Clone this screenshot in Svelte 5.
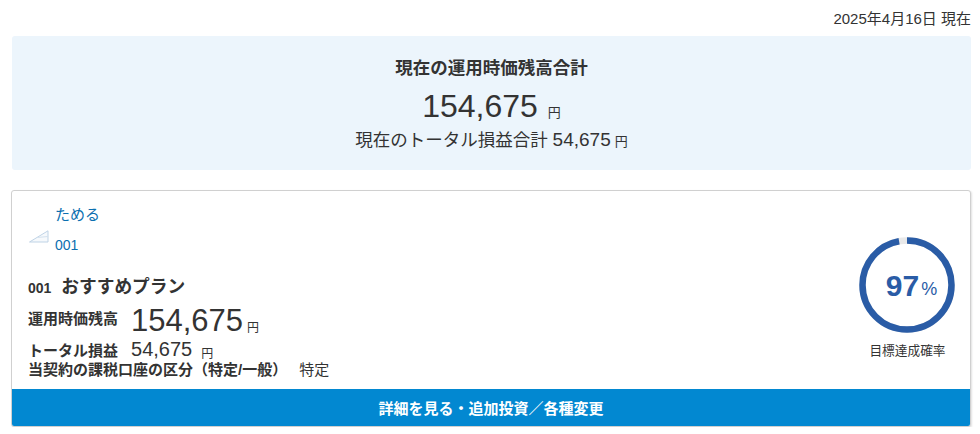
<script lang="ts">
  const rate = 97;
  const r = 44.5;
  const circ = 2 * Math.PI * r;
  const gap = circ * (1 - rate / 100);
</script>

<main class="page">
  <p class="asof">2025年4月16日 現在</p>

  <section class="total">
    <h2>現在の運用時価残高合計</h2>
    <p class="amount">154,675<span class="yen">円</span></p>
    <p class="profit">現在のトータル損益合計 <span class="num">54,675</span><span class="yen">円</span></p>
  </section>

  <section class="card">
    <div class="body">
      <div class="info">
        <div class="cat">
          <svg class="cat-icon" width="20" height="13" viewBox="0 0 20 13" aria-hidden="true">
            <path d="M.5 12 L19 .8 V12 Z" fill="#f6f9fc" stroke="#bfd3e6" stroke-width="1" />
            <path d="M8 7.5 L19 6.5" stroke="#d3e1ee" stroke-width="1" />
          </svg>
          <div class="cat-text">
            <a href="#top">ためる</a>
            <a class="code" href="#top">001</a>
          </div>
        </div>

        <h3><span class="no">001</span>おすすめプラン</h3>
        <div class="row balance">
          <span class="label">運用時価残高</span>
          <span class="big">154,675</span><span class="yen">円</span>
        </div>
        <div class="row pl">
          <span class="label">トータル損益</span>
          <span class="mid">54,675</span><span class="yen">円</span>
        </div>
        <div class="row tax">
          <span class="label">当契約の課税口座の区分（特定/一般）</span>
          <span class="taxval">特定</span>
        </div>
      </div>

      <div class="goal">
        <div class="ring">
          <svg width="96" height="96" viewBox="0 0 96 96" aria-hidden="true">
            <circle cx="48" cy="48" r={r} fill="none" stroke="#e9e9e9" stroke-width="6.5" />
            <circle
              cx="48"
              cy="48"
              r={r}
              fill="none"
              stroke="#2a5ca6"
              stroke-width="6.5"
              stroke-dasharray="{circ - gap} {gap}"
              transform="rotate(-90 48 48)"
            />
          </svg>
          <span class="pct">{rate}<small>%</small></span>
        </div>
        <p class="goal-label">目標達成確率</p>
      </div>
    </div>
    <button type="button" class="more">詳細を見る・追加投資／各種変更</button>
  </section>
</main>

<style>
  :global(body) {
    margin: 0;
    background: #fff;
    color: #333;
    font-family: "Liberation Sans", "Noto Sans CJK JP", sans-serif;
  }

  .page {
    padding: 10px 9px 0 11px;
  }

  .asof {
    margin: 0;
    height: 26px;
    font-size: 15px;
    line-height: 18px;
    text-align: right;
  }

  .total {
    box-sizing: border-box;
    height: 134px;
    margin-left: 1px;
    padding-top: 22px;
    border-radius: 3px;
    background: #ecf5fc;
    text-align: center;
  }

  h2 {
    margin: 0;
    font-size: 17.5px;
    line-height: 21px;
    font-weight: 700;
  }

  .amount {
    margin: 12px 0 0;
    font-size: 32px;
    line-height: 30px;
  }

  .amount .yen {
    margin-left: 10px;
  }

  .profit {
    margin: 0;
    font-size: 17.5px;
    line-height: 24px;
  }

  .num {
    font-size: 19px;
  }

  .profit .yen {
    margin-left: 4px;
  }

  .yen {
    font-size: 13px;
  }

  .card {
    margin-top: 20px;
    background: #fff;
    border: 1px solid #d0d0d0;
    border-radius: 3px;
    box-shadow: 1px 1px 2px rgba(0, 0, 0, 0.12);
    overflow: hidden;
  }

  .body {
    box-sizing: border-box;
    height: 198px;
    display: flex;
    justify-content: space-between;
    padding: 14px 15px 0 16px;
  }

  .cat {
    display: flex;
    align-items: center;
    gap: 6px;
    height: 50px;
  }

  .cat-icon {
    margin-top: 12px;
    margin-left: 1px;
  }

  .cat-text {
    display: flex;
    flex-direction: column;
    gap: 10px;
  }

  .cat-text a {
    color: #0b6fb0;
    font-size: 15px;
    line-height: 20px;
    text-decoration: none;
  }

  .cat-text .code {
    font-size: 14px;
  }

  h3 {
    margin: 20px 0 0;
    font-size: 17.7px;
    line-height: 24px;
    font-weight: 700;
  }

  .no {
    font-size: 14px;
    margin-right: 10px;
  }

  .row {
    display: flex;
    align-items: center;
  }

  .label {
    font-size: 15px;
    font-weight: 700;
  }

  .balance {
    margin-top: 6px;
    height: 30px;
  }

  .balance .label {
    margin-bottom: 8px;
  }

  .big {
    margin-left: 13px;
    font-size: 31px;
    line-height: 30px;
  }

  .balance .yen {
    margin: 10px 0 0 4px;
    font-size: 12px;
  }

  .pl {
    height: 26px;
  }

  .mid {
    margin-left: 13px;
    font-size: 20px;
    line-height: 24px;
  }

  .pl .yen {
    margin: 6px 0 0 9px;
    font-size: 12px;
  }

  .tax {
    height: 16px;
    line-height: 16px;
  }

  .taxval {
    margin-left: 12px;
    font-size: 15px;
    font-weight: 400;
  }

  .goal {
    display: flex;
    flex-direction: column;
    align-items: center;
    padding-top: 32px;
  }

  .ring {
    position: relative;
    width: 96px;
    height: 96px;
  }

  .ring svg {
    display: block;
  }

  .pct {
    position: absolute;
    inset: 2px 0 0 9px;
    display: flex;
    align-items: center;
    justify-content: center;
    color: #2a5ca6;
    font-size: 30px;
    font-weight: 700;
  }

  .pct small {
    margin: 6px 0 0 2px;
    font-size: 18px;
    font-weight: 400;
  }

  .goal-label {
    margin: 10px 0 0 1px;
    font-size: 12.7px;
    line-height: 16px;
  }

  .more {
    display: block;
    width: 100%;
    height: 37px;
    padding: 0;
    border: 0;
    background: #0288d1;
    color: #fff;
    font: 700 15px "Liberation Sans", "Noto Sans CJK JP", sans-serif;
  }
</style>
